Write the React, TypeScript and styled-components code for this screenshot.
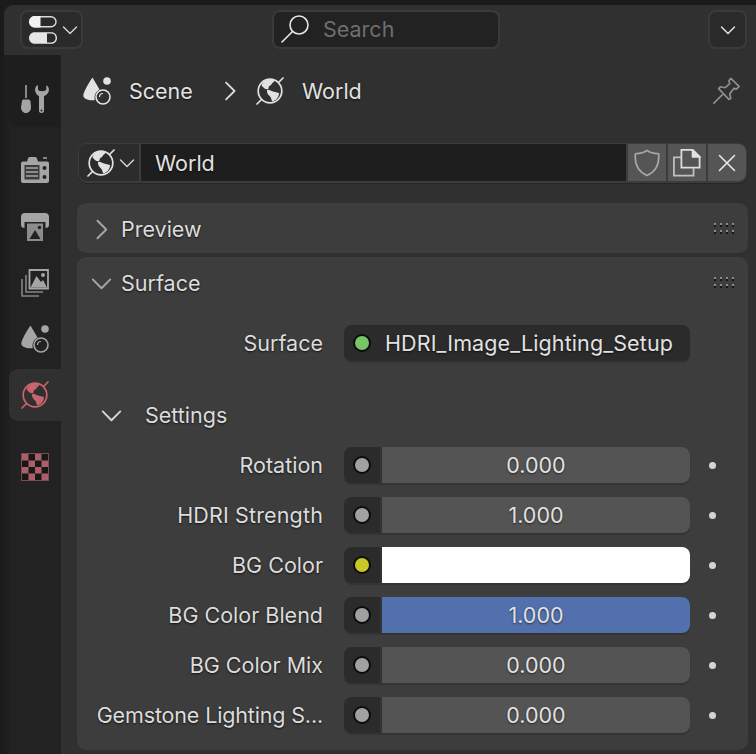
import * as React from 'react';
import styled, { createGlobalStyle } from 'styled-components';

const GlobalStyle = createGlobalStyle`
  html, body {
    margin: 0;
    padding: 0;
    background: #1d1d1d;
    font-family: Inter, "Liberation Sans", sans-serif;
  }
  * { box-sizing: border-box; }
`;

const Screen = styled.div`
  width: 756px;
  height: 754px;
  padding: 5px 0 0 4px;
  background: #1b1b1b;
  overflow: hidden;
`;

const Editor = styled.div`
  height: 749px;
  border-radius: 9px 0 0 0;
  background: #303030;
  overflow: hidden;
  display: flex;
  flex-direction: column;
`;

const Header = styled.div`
  height: 50px;
  flex: none;
  display: flex;
  align-items: center;
  padding: 0 9px 0 16px;
`;

const HeaderButton = styled.div<{ $width: number; $push?: boolean }>`
  width: ${p => p.$width}px;
  height: 39px;
  margin-top: -1px;
  margin-left: ${p => (p.$push ? 'auto' : '0')};
  border-radius: 8px;
  background: #2a2a2a;
  border: 2px solid #3a3a3a;
  display: flex;
  align-items: center;
  justify-content: ${p => (p.$push ? 'center' : 'flex-start')};
  padding-left: ${p => (p.$push ? 0 : 7)}px;
  gap: 3px;
`;

const SearchBox = styled.div`
  width: 228px;
  height: 39px;
  margin: -1px 0 0 189px;
  border-radius: 8px;
  background: #222222;
  border: 2px solid #3a3a3a;
  display: flex;
  align-items: center;
  padding: 0 0 2px 7px;
  gap: 14px;
  font-size: 21.5px;
  color: #6e6e6e;
`;

const Body = styled.div`
  flex: 1;
  display: flex;
  min-height: 0;
`;

const Sidebar = styled.div`
  width: 57px;
  flex: none;
  background: #222222;
  border-left: 5px solid #1e1e1e;
  display: flex;
  flex-direction: column;
`;

const ToolTab = styled.div`
  height: 72px;
  flex: none;
  margin-bottom: 15px;
  border-radius: 0 0 0 9px;
  background: #1e1e1e;
  display: flex;
  align-items: flex-end;
  padding: 0 0 14px 12px;
`;

const Tab = styled.div<{ $active?: boolean; $gap?: number }>`
  height: 52px;
  flex: none;
  margin: ${p => (p.$gap ? p.$gap + 2 : 2)}px 0 2px;
  border-radius: 9px 0 0 9px;
  background: ${p => (p.$active ? '#303030' : 'transparent')};
  display: flex;
  align-items: center;
  padding-left: 12px;
`;

const Main = styled.div`
  flex: 1;
  min-width: 0;
  padding: 0 8px 0 16px;
  display: flex;
  flex-direction: column;
`;

const Breadcrumb = styled.div`
  height: 72px;
  flex: none;
  display: flex;
  align-items: center;
  padding-left: 6px;
  font-size: 21.5px;
  color: #e2e2e2;
  text-shadow: 0 1px 2px rgba(0, 0, 0, 0.7);
`;

const Crumb = styled.span<{ $width: number }>`
  width: ${p => p.$width}px;
  height: 28px;
  line-height: 28px;
  flex: none;
  display: flex;
  align-items: center;
`;

const PinSlot = styled.div`
  margin-left: auto;
  margin-right: 7px;
  display: flex;
`;

const IdRow = styled.div`
  height: 40px;
  flex: none;
  margin: 16px 0 0 1px;
  width: 669px;
  padding: 1px;
  border-radius: 9px;
  background: #3c3c3c;
  box-shadow: 0 1px 0 #262626;
  display: flex;
  gap: 2px;
`;

const IdSelect = styled.div`
  width: 60px;
  flex: none;
  height: 37px;
  border-radius: 8px 0 0 8px;
  background: #2c2c2c;
  display: flex;
  align-items: center;
  padding-left: 8px;
  gap: 2px;
`;

const IdName = styled.div`
  flex: 1;
  height: 37px;
  background: #1e1e1e;
  font-size: 21.5px;
  line-height: 39px;
  padding-left: 14px;
  color: #e2e2e2;
  text-shadow: 0 1px 2px rgba(0, 0, 0, 0.7);
`;

const IdButton = styled.div<{ $last?: boolean }>`
  width: 38px;
  flex: none;
  height: 37px;
  background: #555555;
  border-radius: ${p => (p.$last ? '0 8px 8px 0' : '0')};
  display: flex;
  align-items: center;
  justify-content: center;
`;

const Panel = styled.div<{ $height: number; $gap: number }>`
  height: ${p => p.$height}px;
  flex: none;
  margin-top: ${p => p.$gap}px;
  border-radius: 9px;
  background: #3d3d3d;
`;

const PanelHead = styled.div`
  height: 50px;
  display: flex;
  align-items: center;
  padding: 2px 13px 0 11px;
  gap: 6px;
  font-size: 21.5px;
  line-height: 28px;
  color: #dcdcdc;
  text-shadow: 0 1px 2px rgba(0, 0, 0, 0.7);
`;

const Grip = styled.div`
  margin-left: auto;
  margin-top: -2px;
  display: flex;
`;

const FieldRow = styled.div<{ $gap?: number }>`
  height: 36px;
  margin-top: ${p => p.$gap ?? 14}px;
  display: flex;
  align-items: center;
`;

const Label = styled.div<{ $tracking?: number }>`
  width: 267px;
  flex: none;
  padding-right: 21px;
  text-align: right;
  white-space: nowrap;
  font-size: 21.5px;
  letter-spacing: ${p => p.$tracking ?? 0}px;
  color: #dcdcdc;
  text-shadow: 0 1px 2px rgba(0, 0, 0, 0.7);
`;

const FieldShell = styled.div`
  width: 346px;
  height: 36px;
  flex: none;
  border-radius: 8px;
  box-shadow: 0 2px 0 #343434;
  display: flex;
  overflow: hidden;
  background: #2b2b2b;
`;

const SocketCell = styled.div<{ $split?: boolean }>`
  width: 38px;
  flex: none;
  display: flex;
  align-items: center;
  padding-left: 9px;
  border-right: ${p => (p.$split ? '2px solid #343434' : 'none')};
`;

const Socket = styled.span<{ $color: string }>`
  width: 18px;
  height: 18px;
  flex: none;
  border-radius: 50%;
  border: 2px solid #0c0c0c;
  background: ${p => p.$color};
`;

const ValueField = styled.div<{ $bg: string }>`
  flex: 1;
  background: ${p => p.$bg};
  font-size: 21.5px;
  line-height: 36px;
  text-align: center;
  color: #e2e2e2;
  text-shadow: 0 1px 2px rgba(0, 0, 0, 0.6);
`;

const NodeName = styled.div`
  flex: 1;
  font-size: 21.5px;
  letter-spacing: 0.12px;
  line-height: 36px;
  padding-left: 3px;
  color: #e2e2e2;
  white-space: nowrap;
  text-shadow: 0 1px 2px rgba(0, 0, 0, 0.7);
`;

const Decorator = styled.span`
  width: 7px;
  height: 7px;
  margin-left: 19px;
  flex: none;
  border-radius: 50%;
  background: #d4d4d4;
`;

const SubHead = styled.div`
  height: 36px;
  margin-top: 36px;
  display: flex;
  align-items: center;
  padding-left: 21px;
  gap: 20px;
  font-size: 21.5px;
  color: #dcdcdc;
  text-shadow: 0 1px 2px rgba(0, 0, 0, 0.7);
`;

type IconProps = { color?: string; size?: number };

const Chevron = ({ dir, color = '#d8d8d8', size = 20 }: IconProps & { dir: 'down' | 'right' }) => (
  <svg width={size} height={size} viewBox="0 0 20 20" fill="none" style={{ flex: 'none' }}>
    <path
      d={dir === 'down' ? 'M3.5 7 L10 13.5 L16.5 7' : 'M7 3.5 L13.5 10 L7 16.5'}
      stroke={color}
      strokeWidth="1.4"
      strokeLinecap="round"
      strokeLinejoin="round"
    />
  </svg>
);

const GlobeIcon = ({ color = '#e2e2e2' }: IconProps) => (
  <svg width="28" height="28" viewBox="0 0 28 28" fill="none" style={{ flex: 'none' }}>
    <circle cx="14" cy="14" r="11.8" stroke={color} strokeWidth="1.7" />
    <path
      d="M9 3.5 C12 1.8 17 2 19 3.2 C18 5.5 16 5.5 15.6 7 C15.2 8.6 13 8.6 12.5 10 C13.5 11 12 12.5 10.5 12.2 C8.5 12 6 9.5 5.5 8 C6.5 6 7.5 4.5 9 3.5 Z"
      fill={color}
    />
    <path
      d="M11 13 C13 12.2 15 14 17 14.5 C19 15 21 15.5 23 16 C23 20 20 23.5 16.5 24.6 C15 23 15.6 20.8 14 19.5 C12.5 18.2 10.5 16 11 13 Z"
      fill={color}
    />
    <path d="M23 5 L27 1 M1 27 L5 23" stroke={color} strokeWidth="1.7" strokeLinecap="round" />
  </svg>
);

const SceneIcon = ({ color = '#e2e2e2' }: IconProps) => (
  <svg width="28" height="28" viewBox="0 0 28 28" fill="none" style={{ flex: 'none' }}>
    <path
      d="M9.5 0.5 L16.5 12.5 C13.5 14 11.5 17 11.5 20.5 C11.5 21.5 11.6 22.2 11.8 23 C7 24 0 22 0.3 18.5 C0.6 15 5.5 6 9.5 0.5 Z"
      fill={color}
    />
    <circle cx="24" cy="4" r="3.8" fill={color} />
    <circle cx="20" cy="20" r="7" stroke={color} strokeWidth="1.6" />
    <path d="M16.5 20 A3.5 3.5 0 0 1 20 16.5" stroke={color} strokeWidth="1.2" />
  </svg>
);

const ToolIcon = ({ color = '#a5a5a5' }: IconProps) => (
  <svg width="28" height="28" viewBox="0 0 28 28" fill="none" style={{ flex: 'none' }}>
    <path d="M5 0 V13" stroke={color} strokeWidth="1.6" />
    <path d="M1 16 C1 15 2 14.5 3 14.5 H7 C8 14.5 9 15 9.5 16 L10 22 C10 25.5 8 28 5 28 C2 28 0 25.5 0 22 Z" fill={color} />
    <path
      d="M17 0.3 C14.5 1 13.5 4 14.5 7 C15 9 16.5 10.5 18 11 V26 C18 28.6 23 28.6 23 26 V11 C24.5 10.5 27 9 27.8 6 C28.3 4 27.5 1.2 25.3 0.3 V4.5 C25.3 6.8 17 6.8 17 4.5 Z"
      fill={color}
    />
    <circle cx="20.5" cy="25.5" r="1" fill="#222" />
  </svg>
);

const RenderIcon = ({ color = '#a5a5a5' }: IconProps) => (
  <svg width="28" height="26" viewBox="0 0 28 26" fill="none" style={{ flex: 'none' }}>
    <path
      d="M2 4.5 H6 L7 1.5 C7.3 0.5 8 0 9 0 H14 C15 0 15.7 0.5 16 1.5 L17 4.5 H26 C27.2 4.5 28 5.3 28 6.5 V24 C28 25.2 27.2 26 26 26 H2 C0.8 26 0 25.2 0 24 V6.5 C0 5.3 0.8 4.5 2 4.5 Z"
      fill={color}
    />
    <path d="M22 1 H26" stroke={color} strokeWidth="1.6" />
    <path d="M3.5 8 H18.5 V22.5 H3.5 Z" fill="#3c3c3c" />
    <path d="M5 11 H17 M5 15 H17 M5 19 H17" stroke={color} strokeWidth="1.5" />
    <circle cx="23.5" cy="11" r="2" fill="#222" />
    <circle cx="23.5" cy="20" r="2" fill="#222" />
  </svg>
);

const OutputIcon = ({ color = '#a5a5a5' }: IconProps) => (
  <svg width="28" height="28" viewBox="0 0 28 28" fill="none" style={{ flex: 'none' }}>
    <path d="M4 0 H24 C26.5 0 28 1.5 28 4 V12 C28 14 26.5 15 24.5 15 V9 H3.5 V15 C1.5 15 0 14 0 12 V4 C0 1.5 1.5 0 4 0 Z" fill={color} />
    <path d="M6 10.5 H22 V28 H6 Z" fill="#8c8c8c" />
    <path d="M8.5 26 L14 17 L19.5 26 Z" fill="#222" />
    <circle cx="18.5" cy="14.5" r="1.8" fill="#222" />
  </svg>
);

const ViewLayerIcon = ({ color = '#a5a5a5' }: IconProps) => (
  <svg width="28" height="28" viewBox="0 0 28 28" fill="none" style={{ flex: 'none' }}>
    <path d="M8.5 1 H27 V19.5 H8.5 Z" stroke={color} strokeWidth="1.8" />
    <path d="M9.5 18.5 L15.5 7 L20 13 L22 11 L26 18.5 Z" fill={color} />
    <circle cx="22" cy="6" r="2" fill={color} />
    <path d="M5 6 V23 H22 M1 10 V27 H18" stroke={color} strokeWidth="1.6" opacity="0.75" />
  </svg>
);

const CheckerIcon = () => {
  const cells = [];
  for (let row = 0; row < 4; row++) {
    for (let col = 0; col < 4; col++) {
      if ((row + col) % 2 === 1) {
        cells.push(<rect key={`${row}-${col}`} x={1 + col * 6.5} y={1 + row * 6.5} width="6.5" height="6.5" fill="#181818" />);
      }
    }
  }
  return (
    <svg width="28" height="28" viewBox="0 0 28 28" style={{ flex: 'none' }}>
      <rect width="28" height="28" fill="#7d4a50" />
      <rect x="1" y="1" width="26" height="26" fill="#ab5f68" />
      {cells}
    </svg>
  );
};

const TogglesIcon = () => (
  <svg width="28" height="28" viewBox="0 0 28 28" fill="none" style={{ flex: 'none' }}>
    <rect x="1" y="0.8" width="26" height="10" rx="5" stroke="#dcdcdc" strokeWidth="1.4" />
    <path d="M5.5 0 H11.5 V11.6 H5.5 C2.4 11.6 0 9 0 5.8 C0 2.6 2.4 0 5.5 0 Z" fill="#f2f2f2" />
    <path d="M5.5 16.2 H22.5 C25.6 16.2 28 18.8 28 22 C28 25.2 25.6 27.8 22.5 27.8 H5.5 C2.4 27.8 0 25.2 0 22 C0 18.8 2.4 16.2 5.5 16.2 Z" fill="#e6e6e6" />
    <path d="M18 17.6 H22.5 C25 17.6 26.6 19.6 26.6 22 C26.6 24.4 25 26.4 22.5 26.4 H18 Z" fill="#2a2a2a" />
  </svg>
);

const SearchIcon = () => (
  <svg width="28" height="28" viewBox="0 0 28 28" fill="none" style={{ flex: 'none' }}>
    <circle cx="18" cy="10" r="9" stroke="#e8e8e8" strokeWidth="1.6" />
    <path d="M11.5 16.5 L1 27" stroke="#e8e8e8" strokeWidth="1.6" strokeLinecap="round" />
  </svg>
);

const PinIcon = () => (
  <svg width="28" height="28" viewBox="0 0 30 30" fill="none" stroke="#8f8f8f" strokeWidth="1.8" strokeLinejoin="round" strokeLinecap="round">
    <path d="M1 28 L10 19" />
    <path d="M19 1.5 L28 10 L25 13 L22.5 12 L18 18 L19 23 L17 24 L6 12.5 L8 10.5 L13 11.5 L18 7 L17 4 Z" />
  </svg>
);

const ShieldIcon = () => (
  <svg width="26" height="28" viewBox="0 0 28 30" fill="none">
    <path
      d="M14 1.5 C17 4 21 5 26.5 5 C27.5 15 24 24 14 28.5 C4 24 0.5 15 1.5 5 C7 5 11 4 14 1.5 Z"
      stroke="#a8a8a8"
      strokeWidth="1.8"
      strokeLinejoin="round"
    />
  </svg>
);

const CopyIcon = () => (
  <svg width="28" height="28" viewBox="0 0 30 30" fill="none" stroke="#e0e0e0" strokeWidth="1.9">
    <path d="M9 20 V1 H21 L28.5 8.5 V20 Z" />
    <path d="M21 1 V8.5 H28.5 Z" fill="#e0e0e0" />
    <path d="M9 9 H1 V28.5 H22 V20" stroke="#c0c0c0" />
  </svg>
);

const CloseIcon = () => (
  <svg width="18" height="18" viewBox="0 0 18 18" fill="none">
    <path d="M1.5 1.5 L16.5 16.5 M16.5 1.5 L1.5 16.5" stroke="#e8e8e8" strokeWidth="1.6" strokeLinecap="round" />
  </svg>
);

const GripIcon = () => (
  <svg width="22" height="11" viewBox="0 0 22 11">
    {[0, 6, 12, 18].map(x => (
      <g key={x}>
        <rect x={x + 1} y="0" width="2" height="2" fill="#8c8c8c" />
        <rect x={x + 1} y="2" width="2" height="2" fill="#151515" />
        <rect x={x + 1} y="7" width="2" height="2" fill="#8c8c8c" />
        <rect x={x + 1} y="9" width="2" height="2" fill="#151515" />
      </g>
    ))}
  </svg>
);

const settings = [
  { label: 'Rotation', value: '0.000', socket: '#a1a1a1', bg: '#545454', tracking: 0 },
  { label: 'HDRI Strength', value: '1.000', socket: '#a1a1a1', bg: '#545454', tracking: 0.15 },
  { label: 'BG Color', value: '', socket: '#c7c729', bg: '#ffffff', tracking: 0 },
  { label: 'BG Color Blend', value: '1.000', socket: '#a1a1a1', bg: '#5170ad', tracking: 0 },
  { label: 'BG Color Mix', value: '0.000', socket: '#a1a1a1', bg: '#545454', tracking: 0 },
  { label: 'Gemstone Lighting S...', value: '0.000', socket: '#a1a1a1', bg: '#545454', tracking: -0.15 },
];

export default function App() {
  return (
    <>
      <GlobalStyle />
      <Screen>
        <Editor>
          <Header>
            <HeaderButton $width={63}>
              <TogglesIcon />
              <Chevron dir="down" />
            </HeaderButton>
            <SearchBox>
              <SearchIcon />
              Search
            </SearchBox>
            <HeaderButton $width={39} $push>
              <Chevron dir="down" color="#e8e8e8" />
            </HeaderButton>
          </Header>
          <Body>
            <Sidebar>
              <ToolTab>
                <ToolIcon />
              </ToolTab>
              <Tab>
                <RenderIcon />
              </Tab>
              <Tab $gap={1}>
                <OutputIcon />
              </Tab>
              <Tab>
                <ViewLayerIcon />
              </Tab>
              <Tab>
                <SceneIcon color="#a5a5a5" />
              </Tab>
              <Tab $active>
                <GlobeIcon color="#c9636c" />
              </Tab>
              <Tab $gap={16}>
                <CheckerIcon />
              </Tab>
            </Sidebar>
            <Main>
              <Breadcrumb>
                <Crumb $width={46}>
                  <SceneIcon />
                </Crumb>
                <Crumb $width={88}>Scene</Crumb>
                <Crumb $width={39}>
                  <Chevron dir="right" size={26} />
                </Crumb>
                <Crumb $width={46}>
                  <GlobeIcon />
                </Crumb>
                <span>World</span>
                <PinSlot>
                  <PinIcon />
                </PinSlot>
              </Breadcrumb>
              <IdRow>
                <IdSelect>
                  <GlobeIcon />
                  <Chevron dir="down" />
                </IdSelect>
                <IdName>World</IdName>
                <IdButton>
                  <ShieldIcon />
                </IdButton>
                <IdButton>
                  <CopyIcon />
                </IdButton>
                <IdButton $last>
                  <CloseIcon />
                </IdButton>
              </IdRow>
              <Panel $height={50} $gap={20}>
                <PanelHead>
                  <Chevron dir="right" color="#a8a8a8" size={27} />
                  Preview
                  <Grip>
                    <GripIcon />
                  </Grip>
                </PanelHead>
              </Panel>
              <Panel $height={493} $gap={4}>
                <PanelHead>
                  <Chevron dir="down" color="#a8a8a8" size={27} />
                  Surface
                  <Grip>
                    <GripIcon />
                  </Grip>
                </PanelHead>
                <FieldRow $gap={18}>
                  <Label>Surface</Label>
                  <FieldShell>
                    <SocketCell>
                      <Socket $color="#77c566" />
                    </SocketCell>
                    <NodeName>HDRI_Image_Lighting_Setup</NodeName>
                  </FieldShell>
                </FieldRow>
                <SubHead>
                  <Chevron dir="down" size={27} />
                  Settings
                </SubHead>
                {settings.map(row => (
                  <FieldRow key={row.label}>
                    <Label $tracking={row.tracking}>{row.label}</Label>
                    <FieldShell>
                      <SocketCell $split>
                        <Socket $color={row.socket} />
                      </SocketCell>
                      <ValueField $bg={row.bg}>{row.value}</ValueField>
                    </FieldShell>
                    <Decorator />
                  </FieldRow>
                ))}
              </Panel>
            </Main>
          </Body>
        </Editor>
      </Screen>
    </>
  );
}
